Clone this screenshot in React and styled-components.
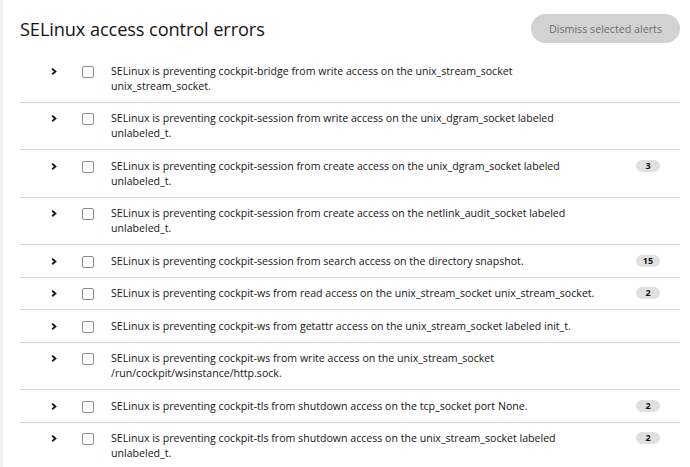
import React from "react";
import styled, { createGlobalStyle } from "styled-components";

const Global = createGlobalStyle`
  html, body { margin: 0; padding: 0; background: #fff; }
  body { font-family: "Open Sans", "Liberation Sans", sans-serif; color: #151515; }
`;

const Page = styled.div`
  width: 690px;
  height: 467px;
  overflow: hidden;
  box-sizing: border-box;
  border-left: 3px solid #f0f0f0;
  padding: 0 10px 0 17px;
`;

const Header = styled.div`
  display: flex;
  align-items: center;
  justify-content: space-between;
  height: 55px;
  padding-top: 2px;
  box-sizing: border-box;
`;

const Title = styled.h2`
  margin: 0;
  font-family: "Open Sans", sans-serif;
  font-weight: 400;
  font-size: 18.2px;
  letter-spacing: -0.1px;
  color: #151515;
`;

const DismissButton = styled.button`
  width: 149px;
  height: 29px;
  border: none;
  border-radius: 15px;
  background: #d2d2d2;
  color: #6a6e73;
  font-family: "Open Sans", sans-serif;
  font-size: 10.7px;
  cursor: default;
  padding: 0;
`;

const List = styled.div`
  display: flex;
  flex-direction: column;
`;

const Row = styled.div`
  display: grid;
  grid-template-columns: 62px 29px 1fr 70px;
  align-items: start;
  padding: 8.5px 0 8px;
  border-bottom: ${(p) => (p.$last ? "none" : "1px solid #d2d2d2")};
`;

const Toggle = styled.div`
  height: 15px;
  display: flex;
  align-items: center;
  padding-left: 31px;
`;

const Check = styled.span`
  display: block;
  width: 10px;
  height: 10px;
  margin-top: 2px;
  border: 1px solid #8a8d90;
  border-radius: 2px;
  background: #fff;
`;

const Text = styled.div`
  font-size: 10.6px;
  line-height: 15px;
  color: #151515;
  padding-right: 4px;
`;

const BadgeCell = styled.div`
  display: flex;
  justify-content: flex-end;
  padding-right: 20px;
  padding-top: 1px;
`;

const Badge = styled.span`
  min-width: 24px;
  height: 12px;
  box-sizing: border-box;
  padding: 0 6px;
  border-radius: 6px;
  background: #e0e0e0;
  font-size: 9px;
  font-weight: 700;
  line-height: 12px;
  text-align: center;
  color: #151515;
`;

const Chevron = () => (
  <svg width="6" height="7" viewBox="0 0 6 7">
    <path d="M1.2 0.8 L4.4 3.5 L1.2 6.2" fill="none" stroke="#151515" strokeWidth="1.8" />
  </svg>
);

const alerts = [
  ["SELinux is preventing cockpit-bridge from write access on the unix_stream_socket unix_stream_socket.", null],
  ["SELinux is preventing cockpit-session from write access on the unix_dgram_socket labeled unlabeled_t.", null],
  ["SELinux is preventing cockpit-session from create access on the unix_dgram_socket labeled unlabeled_t.", 3],
  ["SELinux is preventing cockpit-session from create access on the netlink_audit_socket labeled unlabeled_t.", null],
  ["SELinux is preventing cockpit-session from search access on the directory snapshot.", 15],
  ["SELinux is preventing cockpit-ws from read access on the unix_stream_socket unix_stream_socket.", 2],
  ["SELinux is preventing cockpit-ws from getattr access on the unix_stream_socket labeled init_t.", null],
  ["SELinux is preventing cockpit-ws from write access on the unix_stream_socket /run/cockpit/wsinstance/http.sock.", null],
  ["SELinux is preventing cockpit-tls from shutdown access on the tcp_socket port None.", 2],
  ["SELinux is preventing cockpit-tls from shutdown access on the unix_stream_socket labeled unlabeled_t.", 2],
];

export default function App() {
  return (
    <Page>
      <Global />
      <Header>
        <Title>SELinux access control errors</Title>
        <DismissButton>Dismiss selected alerts</DismissButton>
      </Header>
      <List>
        {alerts.map(([text, count], i) => (
          <Row key={i} $last={i === alerts.length - 1}>
            <Toggle><Chevron /></Toggle>
            <Check />
            <Text>{text}</Text>
            <BadgeCell>{count != null && <Badge>{count}</Badge>}</BadgeCell>
          </Row>
        ))}
      </List>
    </Page>
  );
}
